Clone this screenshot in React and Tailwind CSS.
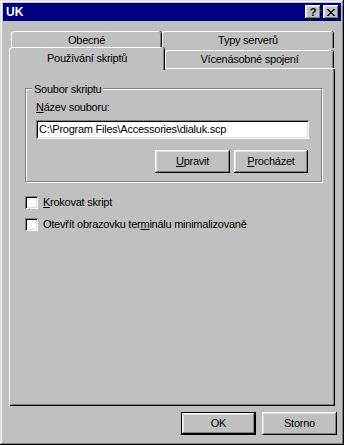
import React from 'react'

const raised =
  'shadow-[inset_-1px_-1px_0_#000,inset_1px_1px_0_#fff,inset_-2px_-2px_0_#808080,inset_2px_2px_0_#dfdfdf]'
const sunken =
  'shadow-[inset_1px_1px_0_#808080,inset_-1px_-1px_0_#fff,inset_2px_2px_0_#000,inset_-2px_-2px_0_#dfdfdf]'

const Tab = ({ children, className = '' }) => (
  <div
    className={`flex items-center justify-center bg-[#c0c0c0] rounded-t-[3px] border-t border-l border-white shadow-[inset_-1px_0_0_#808080,1px_0_0_#000] ${className}`}
  >
    {children}
  </div>
)

const Button = ({ children, primary, className = '' }) => (
  <button
    className={`flex items-center justify-center h-[23px] bg-[#c0c0c0] ${
      primary ? 'border border-black' : ''
    } ${className}`}
  >
    <span className={`flex items-center justify-center w-full h-full ${raised}`}>{children}</span>
  </button>
)

const Checkbox = ({ children }) => (
  <label className="flex items-center h-[13px]">
    <span className={`w-[13px] h-[13px] bg-white ${sunken}`} />
    <span className="ml-[5px]">{children}</span>
  </label>
)

export default function App() {
  return (
    <div
      className="w-[344px] h-[445px] bg-[#c0c0c0] p-[3px] flex flex-col text-[11px] tracking-[-0.25px] text-black shadow-[inset_-1px_-1px_0_#000,inset_1px_1px_0_#dfdfdf,inset_-2px_-2px_0_#808080,inset_2px_2px_0_#fff]"
      style={{ fontFamily: '"Liberation Sans", Arial, sans-serif' }}
    >
      {/* title bar */}
      <div className="h-[18px] bg-[#000080] flex items-center pl-[3px] pr-[2px]">
        <span className="text-white font-bold text-[12px] tracking-normal leading-none">UK</span>
        <div className="ml-auto flex gap-[2px]">
          <div className={`w-[16px] h-[14px] bg-[#c0c0c0] flex items-center justify-center font-bold text-[11px] leading-none ${raised}`}>
            ?
          </div>
          <div className={`w-[16px] h-[14px] bg-[#c0c0c0] flex items-center justify-center ${raised}`}>
            <svg width="8" height="7" viewBox="0 0 8 7" shapeRendering="crispEdges">
              <path d="M0 0h2v1h-2zM6 0h2v1h-2zM1 1h2v1h-2zM5 1h2v1h-2zM2 2h4v1h-4zM3 3h2v1h-2zM2 4h4v1h-4zM1 5h2v1h-2zM5 5h2v1h-2zM0 6h2v1h-2zM6 6h2v1h-2z" fill="#000" />
            </svg>
          </div>
        </div>
      </div>

      {/* tabs */}
      <div className="mt-[10px] ml-[8px] flex h-[17px]">
        <Tab className="w-[150px] h-[17px] pt-[1px]">Obecné</Tab>
        <Tab className="ml-[1px] w-[171px] h-[17px] pt-[1px]">Typy serverů</Tab>
      </div>
      <div className="ml-[6px] flex h-[20px]">
        <Tab className="relative z-10 w-[155px] h-[23px] -mt-[1px] items-start pt-[2px]">
          Používání skriptů
        </Tab>
        <Tab className="ml-[1px] mt-[2px] w-[168px] h-[18px]">Vícenásobné spojení</Tab>
      </div>

      {/* panel */}
      <div className="ml-[6px] w-[326px] h-[338px] border-t border-l border-white shadow-[inset_-1px_-1px_0_#000,inset_-2px_-2px_0_#808080] flex flex-col">
        <div className="relative ml-[15px] mt-[19px] w-[297px] h-[94px] border border-[#808080] shadow-[1px_1px_0_#fff,inset_1px_1px_0_#fff]">
          <span className="absolute left-[6px] -top-[8px] px-[2px] bg-[#c0c0c0]">Soubor skriptu</span>
          <div className="ml-[10px] mt-[12px] leading-[13px]">
            <u>N</u>ázev souboru:
          </div>
          <div className={`ml-[10px] mt-[6px] w-[273px] h-[19px] bg-white flex items-center pl-[3px] ${sunken}`}>
            C:\Program Files\Accessories\dialuk.scp
          </div>
          <div className="mt-[11px] ml-[129px] flex gap-[4px]">
            <Button className="w-[75px]">
              <u>U</u>pravit
            </Button>
            <Button className="w-[74px]">
              <u>P</u>rocházet
            </Button>
          </div>
        </div>

        <div className="ml-[15px] mt-[14px] flex flex-col gap-[9px]">
          <Checkbox>
            <u>K</u>rokovat skript
          </Checkbox>
          <Checkbox>
            Otevřít obrazovku ter<u>m</u>inálu minimalizovaně
          </Checkbox>
        </div>
      </div>

      {/* dialog buttons */}
      <div className="mt-[6px] mr-[4px] flex justify-end gap-[6px]">
        <Button primary className="w-[75px]">
          OK
        </Button>
        <Button className="w-[75px]">Storno</Button>
      </div>
    </div>
  )
}
